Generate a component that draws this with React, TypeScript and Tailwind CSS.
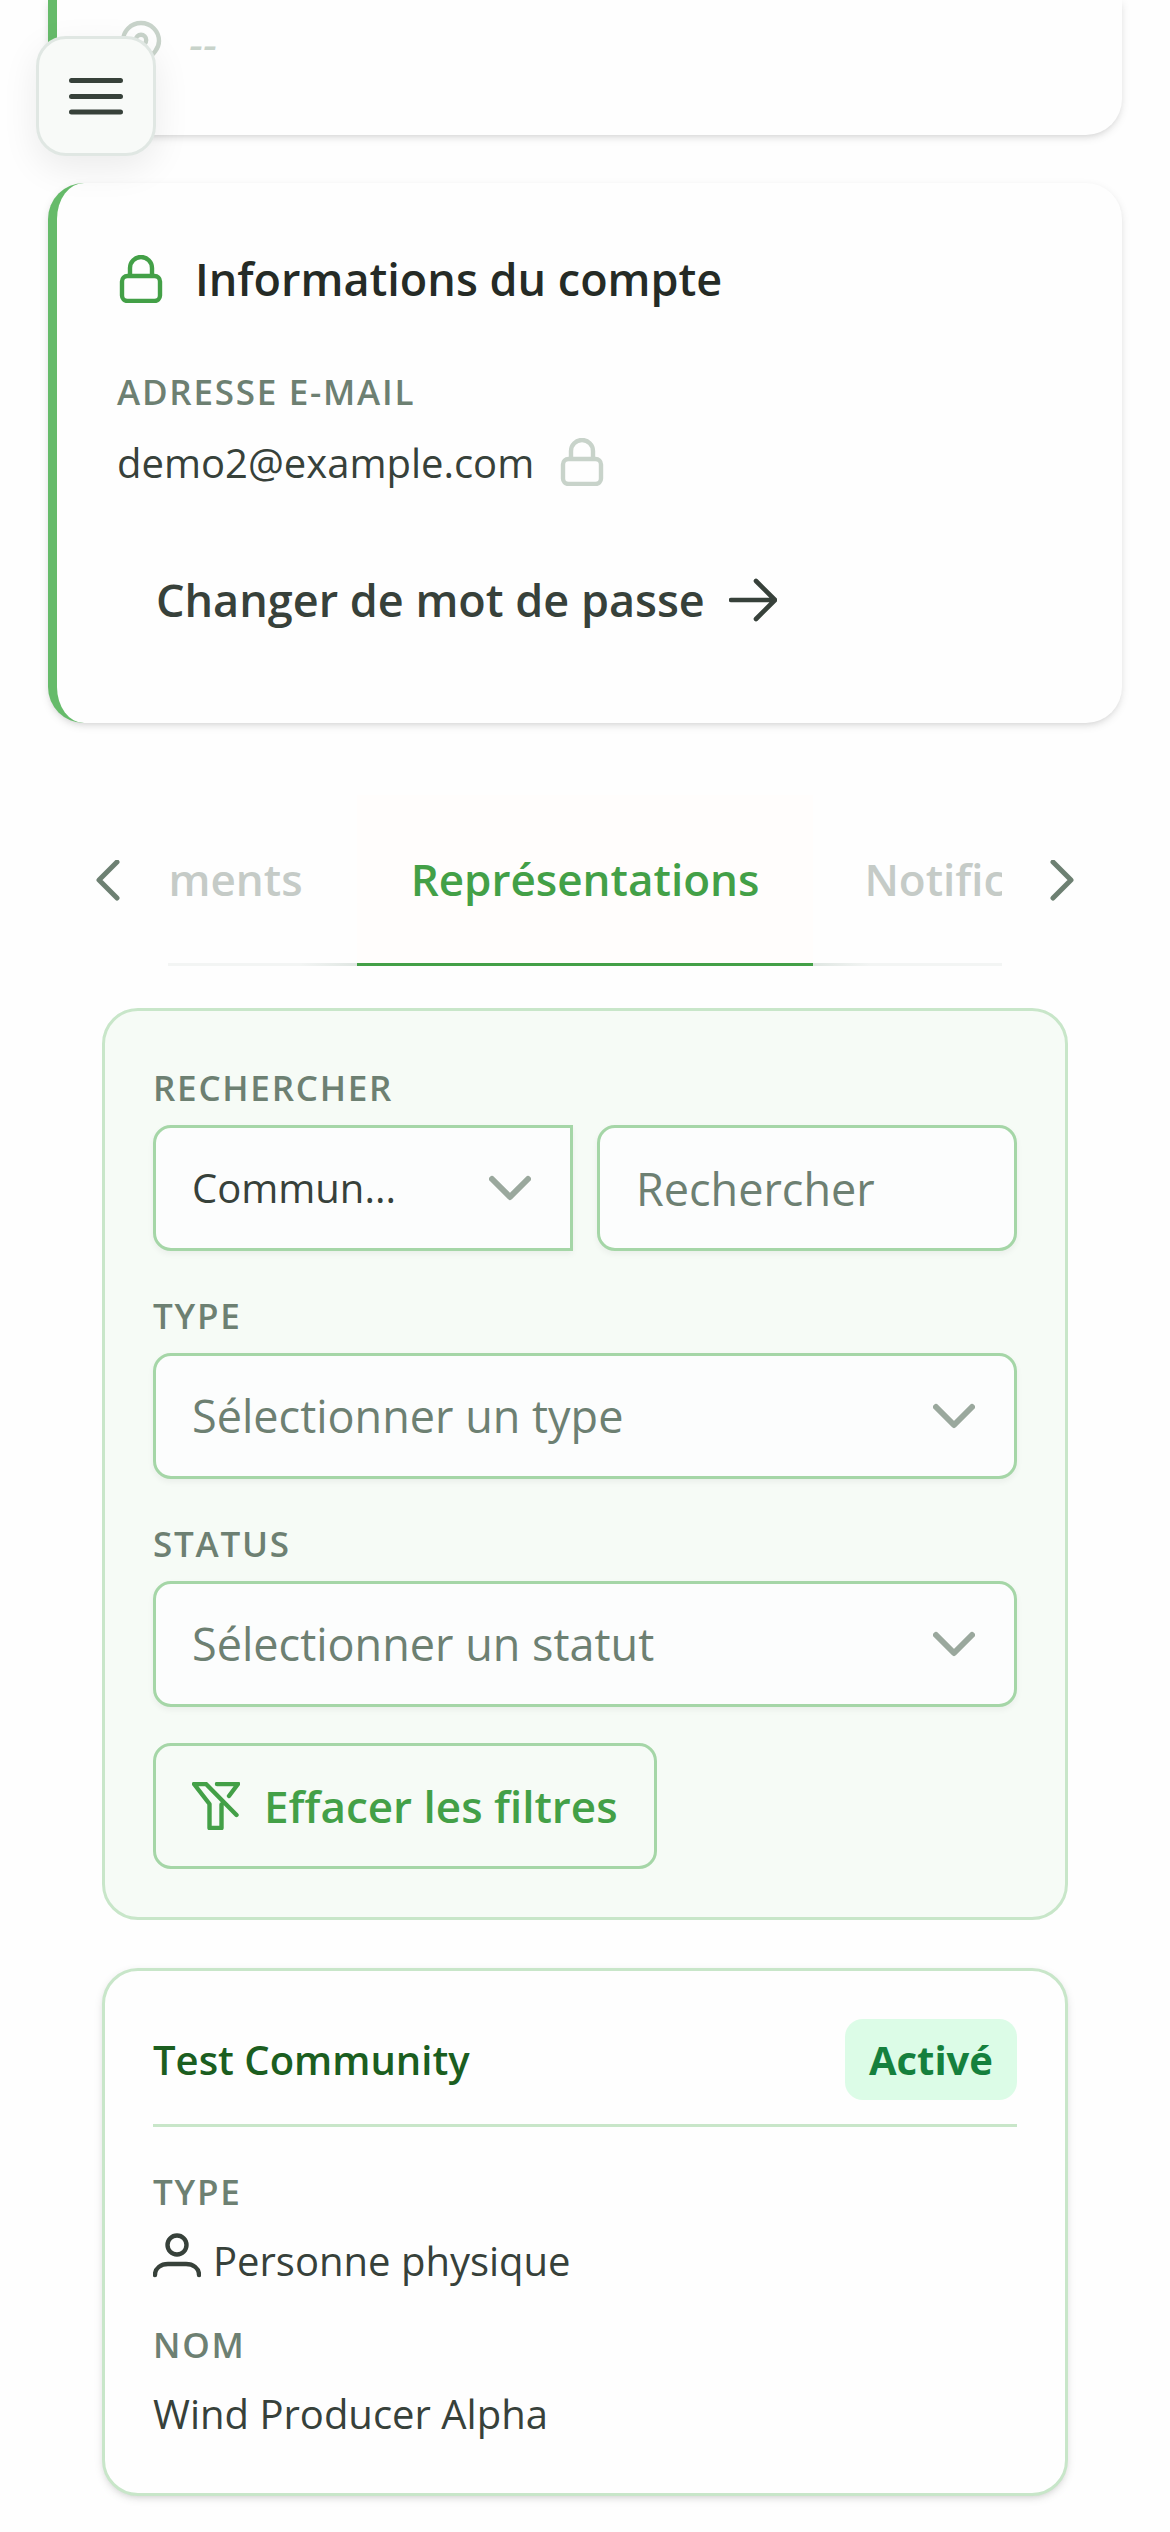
import React, { useState } from 'react';

type IconProps = { className?: string };

const LockIcon = ({ className = '' }: IconProps) => (
  <svg viewBox="0 0 48 48" className={`h-12 w-12 shrink-0 ${className}`} fill="none" stroke="currentColor" strokeWidth="4.4" aria-hidden="true">
    <path d="M13 20V13a11 11 0 0 1 22 0v7" />
    <rect x="5" y="21" width="38" height="25" rx="5.5" />
  </svg>
);

const PinIcon = ({ className = '' }: IconProps) => (
  <svg viewBox="0 0 48 48" className={`h-12 w-12 shrink-0 ${className}`} fill="none" stroke="currentColor" strokeWidth="4.4" aria-hidden="true">
    <path d="M24 46C14 36 6 30 6 21a18 18 0 0 1 36 0c0 9-8 15-18 25Z" strokeLinejoin="round" />
    <circle cx="24" cy="20" r="5.2" />
  </svg>
);

const ArrowIcon = ({ className = '' }: IconProps) => (
  <svg viewBox="0 0 48 48" className={`h-12 w-12 shrink-0 ${className}`} fill="none" stroke="currentColor" strokeWidth="4.6" strokeLinecap="round" strokeLinejoin="round" aria-hidden="true">
    <path d="M2 24h44M27 5l19 19-19 19" />
  </svg>
);

const FilterSlashIcon = ({ className = '' }: IconProps) => (
  <svg viewBox="0 0 48 48" className={`h-12 w-12 shrink-0 ${className}`} fill="none" stroke="currentColor" strokeWidth="4.4" strokeLinecap="round" strokeLinejoin="round" aria-hidden="true">
    <path d="M29.500 22.500V46h-12V22L2 2h12l30.500 31" />
    <path d="M25 2h21l-9 12" />
  </svg>
);

const UserIcon = ({ className = '' }: IconProps) => (
  <svg viewBox="0 0 48 48" className={`h-12 w-12 shrink-0 ${className}`} fill="none" stroke="currentColor" strokeWidth="4.4" strokeLinecap="round" aria-hidden="true">
    <circle cx="24" cy="12" r="9.500" />
    <path d="M2 42c0-7 6-11 13-11h18c7 0 13 4 13 11" />
  </svg>
);

const ChevronDown = () => (
  <svg viewBox="0 0 42 42" className="pointer-events-none absolute top-[42px] right-[42px] h-[42px] w-[42px] text-[#9aa89d]" fill="none" stroke="currentColor" strokeWidth="6" strokeLinecap="round" strokeLinejoin="round" aria-hidden="true">
    <path d="M3 12l18 18 18-18" />
  </svg>
);

const labelClass = 'block pt-[3px] text-[35px] leading-[51px] font-semibold tracking-wider uppercase text-[#6d8072]';
const fieldClass =
  'h-[126px] w-full appearance-none border-3 border-[#a5d6a7] bg-[#fcfdfd] pl-9 shadow-[0_3px_6px_rgba(0,0,0,0.05)] outline-none';

interface SelectFieldProps {
  id: string;
  label: string;
  options: string[];
}

function SelectField({ id, label, options }: SelectFieldProps) {
  return (
    <div className="flex flex-col gap-3">
      <label htmlFor={id} className={labelClass}>{label}</label>
      <div className="relative">
        <select id={id} className={`${fieldClass} rounded-[18px] pr-28 text-[45px] text-[#6d8072]`}>
          {options.map(option => (
            <option key={option}>{option}</option>
          ))}
        </select>
        <ChevronDown />
      </div>
    </div>
  );
}

function App() {
  const [search, setSearch] = useState('');

  return (
    <div className="min-h-screen bg-[#fefefe] px-12 pb-8 font-['Open_Sans','Noto_Sans',sans-serif] text-[#37413a]">
      {/* Menu toggle */}
      <button
        aria-label="Menu"
        className="fixed top-9 left-9 z-10 flex h-[120px] w-[120px] items-center justify-center rounded-[30px] border-3 border-[#e0e7e3] bg-[#f8faf8] shadow-[0_12px_36px_rgba(0,0,0,0.08)]"
      >
        <svg viewBox="0 0 54 54" className="h-[54px] w-[54px]" stroke="currentColor" strokeWidth="5" strokeLinecap="round" aria-hidden="true">
          <path d="M2.500 11.500h49M2.500 27.500h49M2.500 43h49" />
        </svg>
      </button>

      {/* Address */}
      <section className="flex items-center gap-6 rounded-b-[36px] border-l-9 border-[#66bb6a] bg-[#fefefe] px-[60px] pt-3 pb-[60px] shadow-[0_3px_9px_rgba(0,0,0,0.1),0_3px_6px_-3px_rgba(0,0,0,0.1)]">
        <PinIcon className="text-[#c8d3ca]" />
        <span className="text-[45px] leading-[63px] italic text-[#c8d3ca]">--</span>
      </section>

      {/* Account */}
      <section className="mt-12 rounded-[36px] border-l-9 border-[#66bb6a] bg-[#fefefe] p-[60px] shadow-[0_3px_9px_rgba(0,0,0,0.1),0_3px_6px_-3px_rgba(0,0,0,0.1)]">
        <div className="flex items-center gap-[30px]">
          <LockIcon className="text-[#43a047]" />
          <h2 className="text-[45px] leading-[72px] font-semibold text-[#252b26]">Informations du compte</h2>
        </div>
        <div className={`mt-12 ${labelClass}`}>Adresse e-mail</div>
        <div className="mt-3 flex h-[66px] items-center gap-6">
          <span className="text-[40px] leading-[63px]">demo2@example.com</span>
          <LockIcon className="text-[#c8d3ca]" />
        </div>
        <button className="mt-[42px] flex h-[126px] items-center gap-6 px-[39px] text-[45px] font-semibold">
          Changer de mot de passe
          <ArrowIcon />
        </button>
      </section>

      {/* Tabs */}
      <div className="mt-[72px] flex h-[171px] items-stretch text-[44px] font-semibold">
        <button aria-label="Onglet précédent" className="flex w-[120px] shrink-0 items-center justify-center text-[#6d8072]">
          <svg viewBox="0 0 42 42" className="h-[42px] w-[42px]" fill="none" stroke="currentColor" strokeWidth="5" strokeLinecap="round" strokeLinejoin="round" aria-hidden="true">
            <path d="M30 2L12 20l18 18" />
          </svg>
        </button>
        <div role="tablist" className="flex min-w-0 flex-1">
          <div className="flex min-w-0 flex-1 flex-col">
            <button role="tab" aria-selected="false" className="flex min-w-0 flex-1 items-center justify-end overflow-hidden pr-[54px] text-[#c5cbc7]">ments</button>
            <div className="h-[3px] bg-linear-to-r from-[#f3f5f4] from-70% to-[#dfe6e2]" />
          </div>
          <button role="tab" aria-selected="true" className="shrink-0 border-b-3 border-[#43a047] bg-[#fffdfc] px-[54px] text-[#43a047]">Représentations</button>
          <div className="flex min-w-0 flex-1 flex-col">
            <button role="tab" aria-selected="false" className="flex min-w-0 flex-1 items-center overflow-hidden pl-[51px] text-[#c5cbc7]">Notifications</button>
            <div className="h-[3px] bg-linear-to-l from-[#f3f5f4] from-70% to-[#dfe6e2]" />
          </div>
        </div>
        <button aria-label="Onglet suivant" className="flex w-[120px] shrink-0 items-center justify-center text-[#6d8072]">
          <svg viewBox="0 0 42 42" className="h-[42px] w-[42px]" fill="none" stroke="currentColor" strokeWidth="5" strokeLinecap="round" strokeLinejoin="round" aria-hidden="true">
            <path d="M12 2l18 18-18 18" />
          </svg>
        </button>
      </div>

      <main className="mx-[54px] mt-[42px] flex flex-col gap-12">
        {/* Filters */}
        <form className="flex flex-col gap-9 rounded-[36px] border-3 border-[#c8e6c9] bg-[#f6fbf6] p-12">
          <div className="flex flex-col gap-3">
            <label htmlFor="search" className={labelClass}>Rechercher</label>
            <div className="grid grid-cols-2 gap-6">
              <div className="relative">
                <select aria-label="Champ de recherche" className={`${fieldClass} rounded-l-[18px] pr-28 text-[40px]`}>
                  <option>Commun...</option>
                </select>
                <ChevronDown />
              </div>
              <input
                id="search"
                type="text"
                placeholder="Rechercher"
                value={search}
                onChange={e => setSearch(e.target.value)}
                className={`${fieldClass} rounded-[18px] pr-9 text-[45px] placeholder:text-[#6d8072]`}
              />
            </div>
          </div>
          <SelectField id="type" label="Type" options={['Sélectionner un type']} />
          <SelectField id="status" label="Status" options={['Sélectionner un statut']} />
          <button
            type="button"
            onClick={() => setSearch('')}
            className="flex h-[126px] items-center gap-6 self-start rounded-[18px] border-3 border-[#a5d6a7] px-9 text-[44px] font-semibold text-[#43a047]"
          >
            <FilterSlashIcon />
            Effacer les filtres
          </button>
        </form>

        {/* Representation */}
        <article className="rounded-[36px] border-3 border-[#c8e6c9] bg-[#fefefe] p-12 shadow-[0_3px_9px_rgba(0,0,0,0.1),0_3px_6px_-3px_rgba(0,0,0,0.1)]">
          <header className="flex items-center justify-between border-b-3 border-[#c8e6c9] pb-6">
            <h3 className="text-[40px] leading-[60px] font-semibold text-[#1b5e20]">Test Community</h3>
            <span className="flex h-[81px] items-center rounded-[18px] bg-[#dcfce7] px-6 text-[40px] leading-[60px] font-bold text-[#15803d]">Activé</span>
          </header>
          <dl className="mt-9">
            <dt className={labelClass}>Type</dt>
            <dd className="mt-3 flex gap-3 text-[40px] leading-[63px]">
              <UserIcon className="mt-1" />
              Personne physique
            </dd>
            <dt className={`mt-6 ${labelClass}`}>Nom</dt>
            <dd className="mt-3 text-[40px] leading-[63px]">Wind Producer Alpha</dd>
          </dl>
        </article>
      </main>
    </div>
  );
}

export default App;
